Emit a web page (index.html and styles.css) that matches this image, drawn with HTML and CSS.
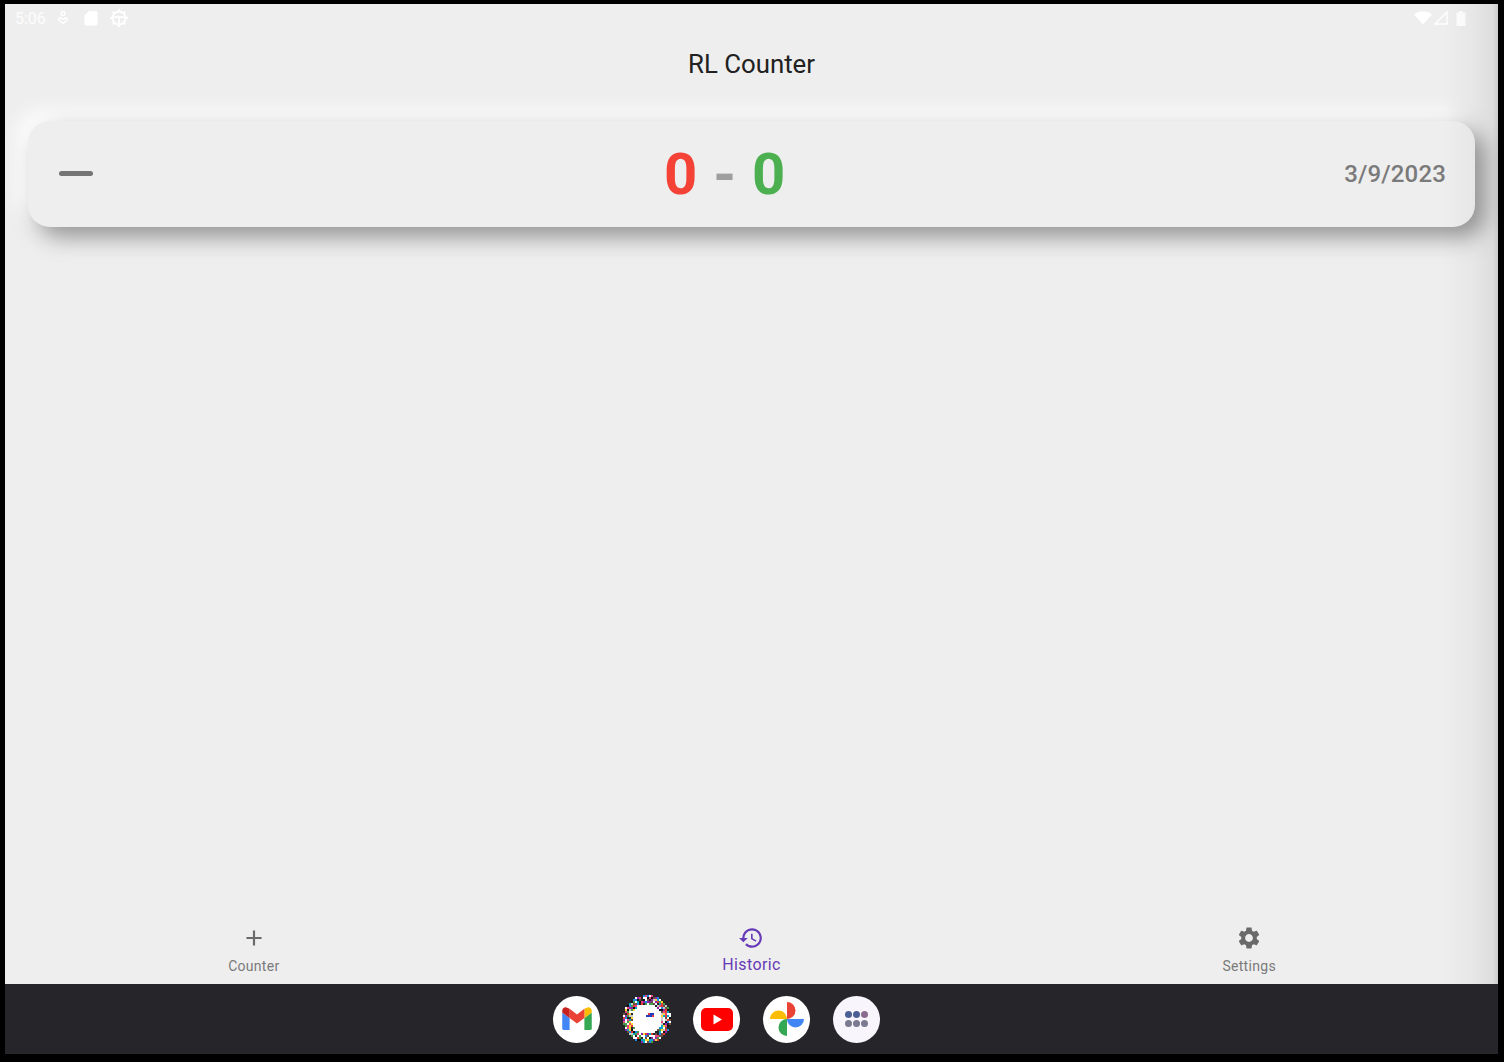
FILE: index.html
```html
<!DOCTYPE html>
<html>
<head>
<meta charset="utf-8">
<title>RL Counter</title>
<link rel="stylesheet" href="styles.css">
</head>
<body>

<div class="screen">

	<div class="status-bar">
		<div class="status-left">
			<span class="time">5:06</span>
			<svg class="st-ic" viewBox="0 0 14 16" width="14" height="16"><circle cx="7" cy="3.5" r="2" fill="none" stroke="#fff" stroke-width="1.4"/><path d="M7 13.5 3 10.2c-1-1 0-2.4 1.3-2.2L7 9.2 9.7 8c1.3-.2 2.3 1.2 1.3 2.2z" fill="none" stroke="#fff" stroke-width="1.4"/></svg>
			<svg class="st-ic card-ic" viewBox="0 0 14 16" width="14" height="16"><path d="M5 1h7a1.5 1.5 0 0 1 1.5 1.500v11.500a1.500 1.500 0 0 1-1.500 1.500H2a1.500 1.500 0 0 1-1.500-1.500V5.500z" fill="#fff"/></svg>
			<svg class="st-ic gear-ic" viewBox="0 0 18 18" width="18" height="18"><circle cx="9" cy="9" r="6.500" fill="none" stroke="#fff" stroke-width="1.800"/><path d="M2.500 8.200h13M9 8.200v6.500M9 0v2.500M9 15.500V18M0 9h2.500M15.500 9H18M2.600 2.600l1.800 1.800M13.600 13.600l1.800 1.800M15.400 2.600l-1.800 1.800M4.400 13.600l-1.800 1.800" stroke="#fff" stroke-width="1.800"/></svg>
		</div>
		<div class="status-right">
			<svg viewBox="0 0 18 14" width="18" height="14"><path d="M0 3.500C5 -.8 13 -.8 18 3.500L9 13.500z" fill="#fff"/></svg>
			<svg class="signal-ic" viewBox="0 0 14 14" width="14" height="14"><path d="M13 1v12H1z" fill="none" stroke="#fff" stroke-width="1.400"/></svg>
			<svg class="batt-ic" viewBox="0 0 10 15" width="10" height="15"><path d="M3 0h4v1.500h2.500V15H.5V1.500H3z" fill="#fff"/></svg>
		</div>
	</div>

	<div class="app-bar">RL Counter</div>

	<div class="content">
		<div class="match-card">
			<div class="minus"></div>
			<div class="score">
				<span class="lose">0</span>
				<span class="sep">-</span>
				<span class="win">0</span>
			</div>
			<div class="date">3/9/2023</div>
		</div>
	</div>

	<div class="bottom-nav">
		<div class="nav-item">
			<svg viewBox="0 0 24 24" width="26" height="26"><path d="M19 13h-6v6h-2v-6H5v-2h6V5h2v6h6v2z"/></svg>
			<span>Counter</span>
		</div>
		<div class="nav-item active">
			<svg viewBox="0 0 24 24" width="26" height="26"><path d="M13 3c-4.970 0-9 4.030-9 9H1l3.890 3.890.070.140L9 12H6c0-3.870 3.130-7 7-7s7 3.130 7 7-3.130 7-7 7c-1.930 0-3.680-.790-4.940-2.060l-1.420 1.420C8.270 19.990 10.510 21 13 21c4.970 0 9-4.030 9-9s-4.030-9-9-9zm-1 5v5l4.280 2.540.720-1.210-3.500-2.080V8H12z"/></svg>
			<span>Historic</span>
		</div>
		<div class="nav-item">
			<svg viewBox="0 0 24 24" width="26" height="26"><path d="M19.140 12.940c.040-.300.060-.610.060-.940 0-.320-.020-.640-.070-.940l2.030-1.580c.180-.140.230-.410.120-.610l-1.920-3.320c-.120-.220-.370-.290-.590-.220l-2.390.960c-.500-.380-1.030-.700-1.620-.940l-.360-2.540c-.040-.240-.240-.410-.480-.410h-3.840c-.240 0-.430.170-.47.410l-.360 2.540c-.590.240-1.130.570-1.620.940l-2.390-.960c-.220-.080-.470 0-.590.220L2.740 8.870c-.120.210-.080.470.120.610l2.030 1.580c-.050.300-.090.630-.090.940s.020.640.070.940l-2.030 1.580c-.180.140-.230.410-.120.610l1.920 3.320c.120.220.370.290.590.220l2.390-.960c.500.380 1.030.700 1.620.940l.360 2.540c.050.240.240.410.480.410h3.840c.240 0 .440-.170.470-.410l.360-2.540c.590-.240 1.130-.560 1.620-.940l2.390.960c.220.080.470 0 .590-.220l1.920-3.320c.120-.220.070-.470-.120-.610l-2.010-1.580zM12 15.600c-1.980 0-3.600-1.620-3.600-3.600s1.620-3.600 3.600-3.600 3.600 1.620 3.600 3.600-1.620 3.600-3.600 3.600z"/></svg>
			<span>Settings</span>
		</div>
	</div>

	<div class="dock">
		<div class="dock-app">
			<svg viewBox="0 0 32 26" width="32" height="24">
				<path d="M2 25h6V12L0 6v17a2 2 0 0 0 2 2z" fill="#4285f4"/>
				<path d="M24 25h6a2 2 0 0 0 2-2V6l-8 6z" fill="#34a853"/>
				<path d="M24 2v10l8-6V4c0-3-3.400-4.700-5.800-2.900z" fill="#fbbc04"/>
				<path d="M8 12V2l8 6 8-6v10l-8 6z" fill="#ea4335"/>
				<path d="M0 4v2l8 6V2L5.800 1.100C3.400-.7 0 1 0 4z" fill="#c5221f"/>
			</svg>
		</div>
		<div class="dock-app glitch">
			<canvas id="noise" width="48" height="48"></canvas>
		</div>
		<div class="dock-app">
			<svg viewBox="0 0 32 23" width="32" height="23">
				<rect width="32" height="23" rx="5" fill="#f00"/>
				<path d="M12.500 6.500v10l8.500-5z" fill="#fff"/>
			</svg>
		</div>
		<div class="dock-app">
			<svg viewBox="0 0 34 34" width="34" height="34">
				<path d="M17 17V0a8.500 8.500 0 0 1 0 17z" fill="#ea4335"/>
				<path d="M17 17h17a8.500 8.500 0 0 1-17 0z" fill="#4285f4"/>
				<path d="M17 17v17a8.500 8.500 0 0 1 0-17z" fill="#34a853"/>
				<path d="M17 17H0a8.500 8.500 0 0 1 17 0z" fill="#fbbc04"/>
			</svg>
		</div>
		<div class="dock-app apps">
			<i class="d1"></i><i class="d1"></i><i class="d2"></i>
			<i class="d3"></i><i class="d3"></i><i class="d3"></i>
		</div>
	</div>

	<div class="edge-shade"></div>

</div>

<script src="noise.js"></script>
</body>
</html>
```

FILE: styles.css
```css
html, body {
	margin : 0;
	height : 100%;
	background-color : #000;
	font-family : "Roboto", sans-serif;
}

body {
	overflow : hidden;
}

.screen {
	position : relative;
	display : flex;
	flex-direction : column;
	width : 1493px;
	height : 1050px;
	margin : 4px 0 0 5px;
	background-color : #eeeeee;
	overflow : hidden;
}

.status-bar {
	display : flex;
	justify-content : space-between;
	align-items : center;
	height : 28px;
	padding : 0 32px 0 10px;
	flex : none;
}

.status-left {
	display : flex;
	align-items : center;
}

.time {
	width : 32px;
	color : rgba(255,255,255,0.9);
	font-size : 16px;
}

.st-ic {
	margin-left : 9px;
}

.card-ic {
	margin-left : 14px;
}

.gear-ic {
	margin-left : 12px;
}

.status-right {
	display : flex;
	align-items : center;
	gap : 2px;
}

.batt-ic {
	margin-left : 6px;
}

.app-bar {
	flex : none;
	height : 64px;
	line-height : 64px;
	text-align : center;
	font-size : 25.8px;
	color : #212121;
}

.content {
	flex : 1;
	padding : 25px 23px 0 23px;
}

.match-card {
	display : flex;
	align-items : center;
	justify-content : space-between;
	height : 106px;
	padding : 0 29px 0 31px;
	border-radius : 22px;
	background-color : #eeeeee;
	box-shadow : 10px 10px 22px rgba(100,100,100,0.65), -10px -10px 20px rgba(255,255,255,1);
}

.minus {
	width : 34px;
	height : 5px;
	margin-top : -1px;
	border-radius : 3px;
	background-color : #757575;
}

.score {
	display : flex;
	align-items : center;
	gap : 16px;
	font-size : 58px;
	font-weight : 700;
	margin-left : 12px;
}

.lose {
	color : #f44336;
}

.win {
	color : #4caf50;
}

.sep {
	color : #9e9e9e;
}

.date {
	color : #7a7a7a;
	font-size : 24px;
	font-weight : 500;
	letter-spacing : 0.15px;
}

.bottom-nav {
	display : grid;
	grid-template-columns : 1fr 1fr 1fr;
	height : 69px;
	flex : none;
}

.nav-item {
	display : flex;
	flex-direction : column;
	align-items : center;
	padding-top : 10px;
	color : #7a7a7a;
	fill : #6a6a6a;
	font-size : 14px;
	letter-spacing : 0.3px;
}

.nav-item svg {
	margin-bottom : 7px;
}

.nav-item.active {
	color : #673ab7;
	fill : #673ab7;
	font-size : 16px;
	letter-spacing : 0.4px;
}

.nav-item.active svg {
	margin-bottom : 4px;
}

.dock {
	display : flex;
	justify-content : center;
	align-items : center;
	gap : 23px;
	height : 70px;
	flex : none;
	background-color : #25252a;
	padding-right : 70px;
}

.dock-app {
	display : flex;
	align-items : center;
	justify-content : center;
	width : 47px;
	height : 47px;
	border-radius : 50%;
	background-color : #fff;
}

.dock-app.glitch {
	background-color : transparent;
}

.dock-app.apps {
	display : grid;
	grid-template-columns : repeat(3, 7px);
	gap : 2px 1px;
	justify-content : center;
	align-content : center;
	background-color : #f8f6fc;
}

.apps i {
	width : 7px;
	height : 7px;
	border-radius : 50%;
}

.apps .d1 {
	background-color : #4a5f94;
}

.apps .d2 {
	background-color : #8a6a8e;
}

.apps .d3 {
	background-color : #7a7a90;
}

#noise {
	display : block;
	width : 48px;
	height : 48px;
	image-rendering : pixelated;
}

.edge-shade {
	position : absolute;
	top : 0;
	right : 0;
	bottom : 70px;
	width : 55px;
	background : linear-gradient(to right, rgba(0,0,0,0), rgba(0,0,0,0.035) 60%, rgba(0,0,0,0.07) 90%, rgba(0,0,0,0.14));
	pointer-events : none;
}
```

FILE: noise.js
```js
// corrupted launcher icon: ring of random coloured pixels around a white disc
let canvas = document.getElementById("noise");
let ctx = canvas.getContext("2d");
let colors = ["#e53935", "#fdd835", "#43a047", "#1e88e5", "#8e24aa", "#ffffff", "#111111", "#00acc1", "#ec407a", "#ffffff", "#6d4c41", "#c8c8c8"];
let seed = 7;

function rand() {
	seed = (seed * 16807) % 2147483647;
	return seed / 2147483647;
}

for(let y = 0; y < 24; y++) {
	for(let x = 0; x < 24; x++) {
		let d = Math.hypot(x - 11.5, y - 11.5);
		if(d < 7.5) {
			ctx.fillStyle = "#fff";
			ctx.fillRect(x * 2, y * 2, 2, 2);
		} else if(d < 12 && rand() > 0.06) {
			ctx.fillStyle = colors[Math.floor(rand() * colors.length)];
			ctx.fillRect(x * 2, y * 2, 2, 2);
		}
	}
}

// small blue and red mark in the middle
ctx.fillStyle = "#1e3fc0";
ctx.fillRect(23, 20, 6, 2);
ctx.fillRect(27, 18, 4, 2);
ctx.fillStyle = "#e53935";
ctx.fillRect(25, 18, 2, 2);
ctx.fillRect(29, 20, 2, 2);
```
